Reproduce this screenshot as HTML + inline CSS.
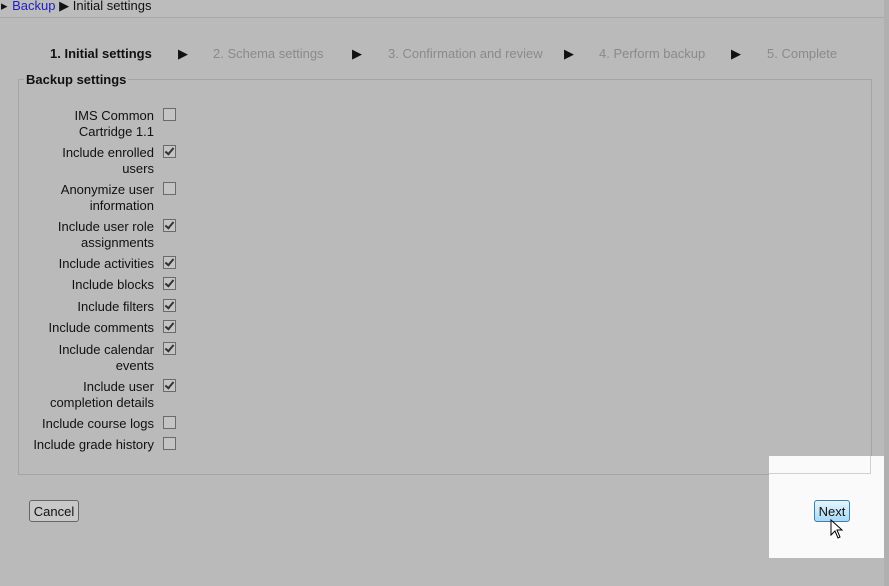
<!DOCTYPE html><html><head><style>
body{margin:0;width:889px;height:586px;background:#bababa;font-family:"Liberation Sans",Arial,sans-serif;font-size:13px;color:#111;position:relative;overflow:hidden}
.a{position:absolute}
.hdr{left:0;top:0;width:884px;height:17px;border-bottom:1px solid #a8a8a8;background:#bcbcbc}
.lab{position:absolute;right:735px;text-align:right;line-height:16px;width:140px}
.cb{position:absolute;left:163px;width:11px;height:11px;border:1px solid #6a6a6a;background:#c4c4c4}
.ck::after{content:"";position:absolute;left:3px;top:0px;width:3px;height:7px;border:solid #333;border-width:0 2px 2px 0;transform:rotate(40deg)}
.st{top:46px;font-size:13px;color:#8a8a8a}
</style></head><body>
<div class="a hdr"></div>
<div class="a" style="left:1px;top:-2px;font-size:13px">▸ <span style="color:#2020c0;margin-left:1px">Backup</span> ▶ Initial settings</div>
<div class="a st" style="left:50px;color:#111;font-weight:bold">1. Initial settings</div>
<div class="a st" style="left:178px;color:#111">▶</div>
<div class="a st" style="left:213px">2. Schema settings</div>
<div class="a st" style="left:352px;color:#111">▶</div>
<div class="a st" style="left:388px">3. Confirmation and review</div>
<div class="a st" style="left:564px;color:#111">▶</div>
<div class="a st" style="left:599px">4. Perform backup</div>
<div class="a st" style="left:731px;color:#111">▶</div>
<div class="a st" style="left:767px">5. Complete</div>
<div class="a" style="left:18px;top:79px;width:852px;height:394px;border:1px solid #a4a4a4"></div>
<div class="a" style="left:24px;top:72px;padding:0 2px;background:#bababa;font-weight:bold">Backup settings</div>
<div class="lab" style="top:108px">IMS Common<br>Cartridge 1.1</div><div class="cb" style="top:108px"></div>
<div class="lab" style="top:145px">Include enrolled<br>users</div><div class="cb ck" style="top:145px"></div>
<div class="lab" style="top:182px">Anonymize user<br>information</div><div class="cb" style="top:182px"></div>
<div class="lab" style="top:219px">Include user role<br>assignments</div><div class="cb ck" style="top:219px"></div>
<div class="lab" style="top:256px">Include activities</div><div class="cb ck" style="top:256px"></div>
<div class="lab" style="top:277px">Include blocks</div><div class="cb ck" style="top:277px"></div>
<div class="lab" style="top:299px">Include filters</div><div class="cb ck" style="top:299px"></div>
<div class="lab" style="top:320px">Include comments</div><div class="cb ck" style="top:320px"></div>
<div class="lab" style="top:342px">Include calendar<br>events</div><div class="cb ck" style="top:342px"></div>
<div class="lab" style="top:379px">Include user<br>completion details</div><div class="cb ck" style="top:379px"></div>
<div class="lab" style="top:416px">Include course logs</div><div class="cb" style="top:416px"></div>
<div class="lab" style="top:437px">Include grade history</div><div class="cb" style="top:437px"></div>
<div class="a" style="left:29px;top:500px;width:48px;height:20px;border:1px solid #666;border-radius:3px;background:#c8c8c8;text-align:center;line-height:21px;font-size:13px">Cancel</div>
<div class="a" style="left:769px;top:456px;width:116px;height:102px;background:#fafafa"></div>
<div class="a" style="left:769px;top:456px;width:101px;height:17px;border-right:1px solid #d0d0d0;border-bottom:1px solid #d0d0d0"></div>
<div class="a" style="left:814px;top:500px;width:34px;height:20px;border:1px solid #3c7fb1;border-radius:3px;background:linear-gradient(#e5f4fc,#a9dbf6);text-align:center;line-height:21px">Next</div>
<svg class="a" style="left:830px;top:519px" width="14" height="22" viewBox="0 0 14 22"><path d="M1 1 L1 16 L5 12 L8 19 L10 18 L7 11 L12 11 Z" fill="#fff" stroke="#000" stroke-width="1"/></svg>
<div class="a" style="left:884px;top:0;width:5px;height:586px;background:#b0b0b0"></div>
</body></html>
